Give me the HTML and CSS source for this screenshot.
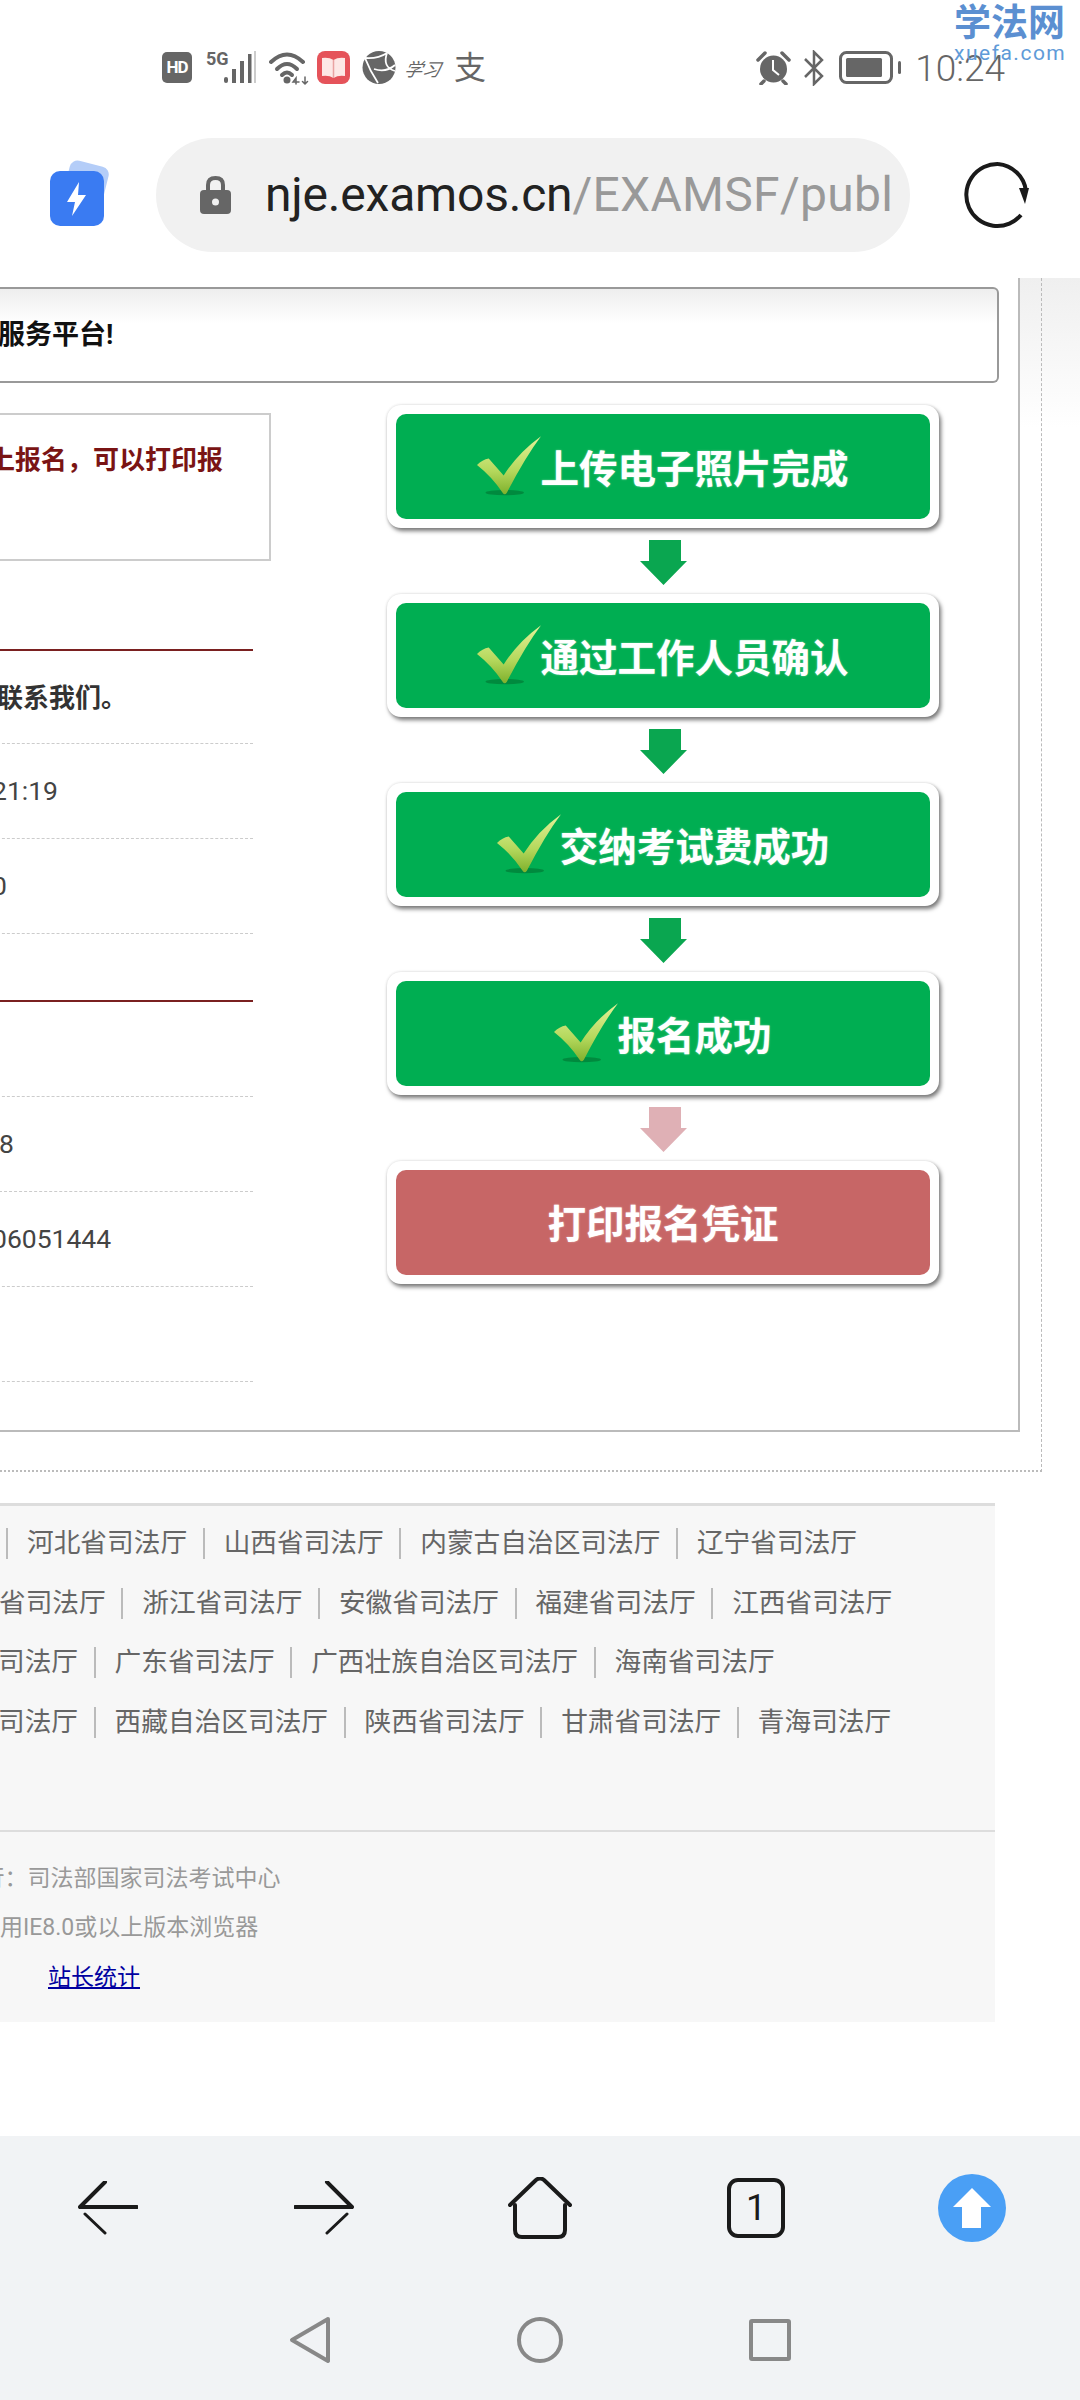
FILE: index.html
```html
<!DOCTYPE html>
<html lang="zh-CN">
<head>
    <meta charset="UTF-8">
    <meta name="viewport" content="width=device-width, initial-scale=1.0">
    <title>报名进度</title>
    <link rel="stylesheet" href="styles.css">
</head>
<body>
    <!-- Shared check mark -->
    <svg class="defs" width="0" height="0">
        <defs>
            <linearGradient id="checkFill" x1="0" y1="0" x2="0" y2="1">
                <stop offset="0" stop-color="#e6f29a"/>
                <stop offset="0.6" stop-color="#b4d85c"/>
                <stop offset="1" stop-color="#7fb02c"/>
            </linearGradient>
            <symbol id="check" viewBox="0 0 60 56">
                <ellipse cx="26" cy="53" rx="18" ry="2.5" fill="#008a3e"/>
                <path d="M0 27 Q5 22 11 21 L25 37 Q38 16 60 0 Q45 20 28 53 Q26 56 24 53 Q14 38 0 27 Z" fill="url(#checkFill)"/>
            </symbol>
        </defs>
    </svg>

    <!-- Status bar -->
    <div class="status-bar">
        <div class="status-left">
            <span class="hd">HD</span>
            <svg class="ic-signal" width="50" height="34" viewBox="0 0 50 34">
                <text x="0" y="14" class="five-g">5G</text>
                <rect x="18" y="26" width="4" height="6" rx="2" fill="#666"/>
                <rect x="26" y="18" width="4" height="14" fill="#666"/>
                <rect x="34" y="10" width="4" height="22" fill="#666"/>
                <rect x="42" y="3" width="3.5" height="29" fill="#666"/>
                <rect x="48" y="0" width="2" height="32" fill="#ccc"/>
            </svg>
            <svg class="ic-wifi" width="41" height="34" viewBox="0 0 41 34" fill="none" stroke="#666" stroke-width="4" stroke-linecap="round">
                <path d="M2 11 Q18 -4 34 11"/>
                <path d="M8 18 Q18 8 28 18"/>
                <path d="M13 24 Q18 19 23 24"/>
                <circle cx="18" cy="29" r="3.5" fill="#666" stroke="none"/>
                <path d="M27 33 V27 L24 31 H30 M36 26 V33 M33.500 30.500 L36 33 L38.500 30.500" stroke-width="1.500"/>
            </svg>
            <svg class="ic-book" width="33" height="33" viewBox="0 0 33 33">
                <rect width="33" height="33" rx="8" fill="#e5535a"/>
                <path d="M5 7 Q12 6 16.500 9 Q21 6 28 7 V25 Q21 24 16.500 27 Q12 24 5 25 Z" fill="#fde8e6"/>
                <path d="M16.500 9 V27" stroke="#e9a3a2" stroke-width="1.500"/>
            </svg>
            <svg class="ic-globe" width="34" height="33" viewBox="0 0 34 33">
                <circle cx="17" cy="16.500" r="16.500" fill="#666"/>
                <path d="M3 7 Q16 8 25 2 M3 7 Q8 20 16 32 M25 2 Q20 16 33 20 M12 18 Q24 22 33 14" fill="none" stroke="#fff" stroke-width="1.800"/>
            </svg>
            <span class="xuexi">学习</span>
            <span class="zhi">支</span>
        </div>
        <div class="status-right">
            <svg class="ic-alarm" width="35" height="34" viewBox="0 0 35 34">
                <circle cx="17.500" cy="18" r="13.500" fill="#666"/>
                <path d="M2 9 L9 2 M33 9 L26 2 M8 30 L5 33 M27 30 L30 33" stroke="#666" stroke-width="3.500" stroke-linecap="round"/>
                <path d="M17 9 V19 L23 24" fill="none" stroke="#fff" stroke-width="2"/>
            </svg>
            <svg class="ic-bt" width="22" height="36" viewBox="0 0 22 36" fill="none" stroke="#666" stroke-width="2.500">
                <path d="M2 9 L19 26 L11 34 V2 L19 10 L2 27"/>
            </svg>
            <svg class="ic-battery" width="62" height="33" viewBox="0 0 62 33">
                <rect x="1.500" y="1.500" width="51" height="30" rx="6" fill="none" stroke="#666" stroke-width="3"/>
                <rect x="7" y="7" width="36" height="19" rx="1.500" fill="#666"/>
                <rect x="59" y="10" width="3" height="13" rx="1.500" fill="#666"/>
            </svg>
            <span class="clock">10:24</span>
        </div>
        <div class="watermark">
            <div class="wm-name">学法网</div>
            <div class="wm-url">xuefa.com</div>
        </div>
    </div>

    <!-- Address bar -->
    <div class="toolbar">
        <svg class="ic-bolt" width="60" height="70" viewBox="0 0 60 70">
            <rect x="16" y="7" width="40" height="54" rx="8" fill="#b4cdf8" transform="rotate(14 36 32)"/>
            <rect x="1" y="15" width="54" height="55" rx="10" fill="#3a7bf2"/>
            <path d="M30 26 L18 46 H26 L23 60 L37 39 H29 Z" fill="#fff"/>
        </svg>
        <div class="url-pill">
            <svg class="ic-lock" width="31" height="39" viewBox="0 0 31 39">
                <path d="M8 18 V10 Q8 3 15.500 3 Q23 3 23 10 V18" fill="none" stroke="#666" stroke-width="4"/>
                <rect y="15" width="31" height="24" rx="4" fill="#666"/>
                <circle cx="15.500" cy="27" r="3.500" fill="#f1f1f1"/>
            </svg>
            <div class="url"><span class="url-host">nje.examos.cn</span>/EXAMSF/publ</div>
        </div>
        <svg class="ic-reload" width="68" height="68" viewBox="0 0 68 68">
            <path d="M36 3 A31 31 0 0 1 64 30 M59 54 A31 31 0 1 1 36 3" fill="none" stroke="#1a1a1a" stroke-width="4"/>
            <path d="M57 27 L67 27 L63 43 Z" fill="#1a1a1a"/>
        </svg>
    </div>

    <!-- Page content -->
    <div class="page">
        <div class="frame">
            <div class="panel">
                <div class="notice"><span class="notice-text">服务平台!</span></div>
                <div class="columns">
                    <div class="info">
                        <div class="alert">上报名，可以打印报</div>
                        <div class="info-section">
                            <div class="info-row info-strong">联系我们。</div>
                            <div class="info-row">21:19</div>
                            <div class="info-row">0</div>
                        </div>
                        <div class="info-section section-second">
                            <div class="info-row"></div>
                            <div class="info-row row-tight">8</div>
                            <div class="info-row">06051444</div>
                            <div class="info-row"></div>
                        </div>
                    </div>

                    <div class="steps">
                        <div class="step"><div class="step-inner"><svg class="check"><use href="#check"/></svg>上传电子照片完成</div></div>
                        <svg class="step-arrow" width="47" height="45" viewBox="0 0 47 45"><path d="M9 0 H41 V21 H47 L23.500 45 L0 21 H9 Z" fill="#0aa650"/></svg>
                        <div class="step"><div class="step-inner"><svg class="check"><use href="#check"/></svg>通过工作人员确认</div></div>
                        <svg class="step-arrow" width="47" height="45" viewBox="0 0 47 45"><path d="M9 0 H41 V21 H47 L23.500 45 L0 21 H9 Z" fill="#0aa650"/></svg>
                        <div class="step"><div class="step-inner"><svg class="check"><use href="#check"/></svg>交纳考试费成功</div></div>
                        <svg class="step-arrow" width="47" height="45" viewBox="0 0 47 45"><path d="M9 0 H41 V21 H47 L23.500 45 L0 21 H9 Z" fill="#0aa650"/></svg>
                        <div class="step"><div class="step-inner"><svg class="check"><use href="#check"/></svg>报名成功</div></div>
                        <svg class="step-arrow" width="47" height="45" viewBox="0 0 47 45"><path d="M9 0 H41 V21 H47 L23.500 45 L0 21 H9 Z" fill="#dfb0b5"/></svg>
                        <div class="step"><div class="step-inner step-todo">打印报名凭证</div></div>
                    </div>
                </div>
            </div>
        </div>

        <!-- Footer -->
        <div class="site-footer">
            <div class="links">
                <div class="link-row row-first"><a>河北省司法厅</a><a>山西省司法厅</a><a>内蒙古自治区司法厅</a><a>辽宁省司法厅</a></div>
                <div class="link-row row-four"><a class="cut">省司法厅</a><a>浙江省司法厅</a><a>安徽省司法厅</a><a>福建省司法厅</a><a>江西省司法厅</a></div>
                <div class="link-row row-three"><a class="cut">司法厅</a><a>广东省司法厅</a><a>广西壮族自治区司法厅</a><a>海南省司法厅</a></div>
                <div class="link-row row-three"><a class="cut">司法厅</a><a>西藏自治区司法厅</a><a>陕西省司法厅</a><a>甘肃省司法厅</a><a>青海司法厅</a></div>
            </div>
            <div class="copyright">
                <p class="copy-org">行：司法部国家司法考试中心</p>
                <p>用IE8.0或以上版本浏览器</p>
                <p class="copy-stat"><a href="#">站长统计</a></p>
            </div>
        </div>
    </div>

    <!-- Browser and system buttons -->
    <div class="bottom-bar">
        <div class="browser-row">
            <svg width="60" height="54" viewBox="0 0 60 54" fill="none" stroke="#1a1a1a" stroke-linecap="round" stroke-linejoin="round">
                <path d="M27 1 L2 26 H59" stroke-width="4"/>
                <path d="M7 33 L27 52" stroke-width="3"/>
            </svg>
            <svg width="60" height="54" viewBox="0 0 60 54" fill="none" stroke="#1a1a1a" stroke-linecap="round" stroke-linejoin="round">
                <path d="M33 1 L58 26 H1" stroke-width="4"/>
                <path d="M53 33 L33 52" stroke-width="3"/>
            </svg>
            <svg width="64" height="62" viewBox="0 0 64 62" fill="none" stroke="#1a1a1a" stroke-width="4" stroke-linecap="round" stroke-linejoin="round">
                <path d="M2 28 L28 3 Q32 0 36 3 L62 28"/>
                <path d="M7 28 V53 Q7 60 14 60 H50 Q57 60 57 53 V28"/>
            </svg>
            <div class="tab-count">1</div>
            <svg width="68" height="68" viewBox="0 0 68 68">
                <circle cx="34" cy="34" r="34" fill="#4a9ff5"/>
                <path d="M34 14 L53 33 H43 V54 H24 V33 H15 Z" fill="#fff"/>
            </svg>
        </div>
        <div class="nav-row">
            <svg width="42" height="48" viewBox="0 0 42 48" fill="none" stroke="#888" stroke-width="4" stroke-linejoin="round">
                <path d="M39 3 L3 24 L39 45 Z"/>
            </svg>
            <svg width="46" height="48" viewBox="0 0 46 48" fill="none" stroke="#888" stroke-width="4">
                <circle cx="23" cy="24" r="21"/>
            </svg>
            <svg width="42" height="42" viewBox="0 0 42 42" fill="none" stroke="#888" stroke-width="4" stroke-linejoin="round">
                <rect x="2" y="2" width="38" height="38" rx="1"/>
            </svg>
        </div>
    </div>
</body>
</html>
```

FILE: styles.css
```css
/* General Reset */
* {
    margin: 0;
    padding: 0;
    box-sizing: border-box;
}

body {
    width: 1080px;
    height: 2400px;
    overflow: hidden;
    font-family: Roboto, "Noto Sans CJK SC", sans-serif;
    background: #fff;
    color: #333;
}

svg {
    display: block;
    flex-shrink: 0;
}

.defs {
    position: absolute;
}

/* Status Bar */
.status-bar {
    position: relative;
    display: flex;
    justify-content: space-between;
    align-items: center;
    height: 105px;
    padding: 30px 75px 0 162px;
    color: #666;
}

.status-left,
.status-right {
    display: flex;
    align-items: center;
}

.hd {
    width: 30px;
    height: 31px;
    border-radius: 5px;
    background: #666;
    color: #fff;
    font-size: 17px;
    font-weight: 700;
    letter-spacing: -1px;
    line-height: 31px;
    text-align: center;
}

.five-g {
    font-family: "Liberation Sans Narrow", Roboto, sans-serif;
    font-size: 18px;
    font-weight: 700;
    fill: #666;
}

.ic-signal { margin-left: 14px; }
.ic-wifi { margin-left: 13px; }
.ic-book { margin-left: 7px; }
.ic-globe { margin-left: 12px; }

.xuexi {
    margin-left: 9px;
    width: 35px;
    font-size: 18px;
    font-style: italic;
    white-space: nowrap;
    transform: skewX(-12deg);
}

.zhi {
    margin-left: 14px;
    font-size: 32px;
    line-height: 34px;
}

.ic-bt { margin-left: 12px; }
.ic-battery { margin-left: 14px; }

.clock {
    margin-left: 14px;
    padding-top: 2px;
    font-size: 37px;
    font-weight: 300;
    line-height: 36px;
}

.watermark {
    position: absolute;
    top: 3px;
    left: 954px;
    width: 114px;
    color: #5b8fd1;
}

.wm-name {
    font-size: 37px;
    font-weight: 700;
    line-height: 41px;
}

.wm-url {
    font-size: 21px;
    letter-spacing: 1.500px;
    line-height: 18px;
    color: #5f9bd8;
}

/* Address Bar */
.toolbar {
    display: flex;
    align-items: center;
    height: 173px;
    padding: 6px 50px 0 49px;
}

.ic-bolt {
    margin-bottom: 8px;
}

.url-pill {
    display: flex;
    align-items: center;
    width: 755px;
    height: 114px;
    margin: 0 52px 0 47px;
    padding-left: 44px;
    border-radius: 57px;
    background: #f1f1f1;
}

.url {
    margin-left: 34px;
    font-size: 48px;
    letter-spacing: 0.300px;
    line-height: 60px;
    white-space: nowrap;
    color: #999;
}

.url-host {
    letter-spacing: -0.200px;
    color: #222;
}

/* Page */
.page {
    height: 1858px;
    overflow: hidden;
    background: linear-gradient(#efefef, #fff 150px);
}

.frame {
    width: 1042px;
    height: 1194px;
    border-right: 1px dashed #bbb;
    border-bottom: 2px dotted #bbb;
}

.panel {
    width: 1020px;
    height: 1154px;
    padding-top: 9px;
    background: #fff;
    border-right: 2px solid #bbb;
    border-bottom: 2px solid #bbb;
}

.notice {
    display: flex;
    align-items: center;
    width: 999px;
    height: 96px;
    border: 2px solid #999;
    border-left: none;
    border-radius: 0 6px 6px 0;
    background: linear-gradient(#eee, #fff 35px);
}

.notice-text {
    margin-left: -2px;
    margin-bottom: 6px;
    font-size: 27px;
    font-weight: 700;
    color: #111;
}

.columns {
    display: flex;
    margin-top: 22px;
}

/* Left column */
.info {
    width: 271px;
    padding-top: 8px;
}

.alert {
    height: 148px;
    margin-left: -11px;
    padding-top: 28px;
    border: 2px solid #ccc;
    border-left: none;
    font-size: 26px;
    font-weight: 700;
    line-height: 34px;
    color: #7a1414;
    white-space: nowrap;
}

.info-section {
    width: 253px;
    margin-top: 88px;
    border-top: 2px solid #7a2020;
}

.section-second {
    margin-top: 66px;
}

.info-row {
    display: flex;
    align-items: center;
    height: 95px;
    margin-left: -8px;
    padding-bottom: 2px;
    border-bottom: 1px dashed #ccc;
    font-size: 26.500px;
    color: #444;
}

.row-tight {
    margin-left: -1px;
}

.info-strong {
    margin-left: -3px;
    height: 93px;
    padding-bottom: 4px;
    font-size: 26px;
    font-weight: 700;
    color: #333;
}

/* Flow steps */
.steps {
    display: flex;
    flex-direction: column;
    align-items: center;
    width: 552px;
    margin-left: 116px;
}

.step {
    width: 552px;
    height: 123px;
    padding: 9px;
    border-radius: 14px;
    background: #fff;
    box-shadow: 2px 3px 4px #777, 0 0 3px #ddd;
}

.step-inner {
    display: flex;
    justify-content: center;
    align-items: center;
    height: 105px;
    padding-bottom: 2px;
    border-radius: 10px;
    background: #00ae52;
    color: #fff;
    font-size: 38.500px;
    font-weight: 700;
    text-shadow: 0 0 2px rgba(255, 255, 255, 0.5);
}

.step-todo {
    padding-bottom: 4px;
    background: #c76666;
}

.check {
    width: 64px;
    height: 60px;
    margin-right: -1px;
}

.step-arrow {
    margin: 12px 0 9px;
}

/* Footer */
.site-footer {
    width: 995px;
    height: 519px;
    margin-top: 31px;
    border-top: 3px solid #ddd;
    background: #f7f7f7;
}

.links {
    height: 326px;
    padding-top: 8px;
    border-bottom: 2px solid #ddd;
}

.link-row {
    display: flex;
    align-items: center;
    height: 59.500px;
    font-size: 26.700px;
    color: #666;
    white-space: nowrap;
}

.link-row a {
    height: 31px;
    line-height: 31px;
    margin-right: 15.500px;
    padding-left: 19px;
    border-left: 2px solid #bbb;
}

.row-first { padding-left: 6px; }
.row-four { margin-left: -1px; }
.row-three { margin-left: -2px; }

.link-row .cut {
    padding-left: 0;
    border-left: none;
}

.copyright {
    padding-top: 22px;
    font-size: 23px;
    line-height: 49px;
    color: #999;
}

.copy-org {
    margin-left: -18.500px;
}

.copy-stat {
    padding-top: 1px;
    padding-left: 48px;
}

.copy-stat a {
    color: #0000a0;
}

/* Bottom Bars */
.bottom-bar {
    height: 264px;
    background: #f1f3f5;
}

.browser-row {
    display: grid;
    grid-template-columns: repeat(5, 216px);
    justify-items: center;
    align-items: center;
    height: 144px;
}

.tab-count {
    width: 58px;
    height: 60px;
    border: 4px solid #1a1a1a;
    border-radius: 11px;
    color: #1a1a1a;
    font-size: 36px;
    line-height: 52px;
    text-align: center;
}

.nav-row {
    display: flex;
    justify-content: center;
    align-items: center;
    gap: 186px;
    height: 120px;
}
```
